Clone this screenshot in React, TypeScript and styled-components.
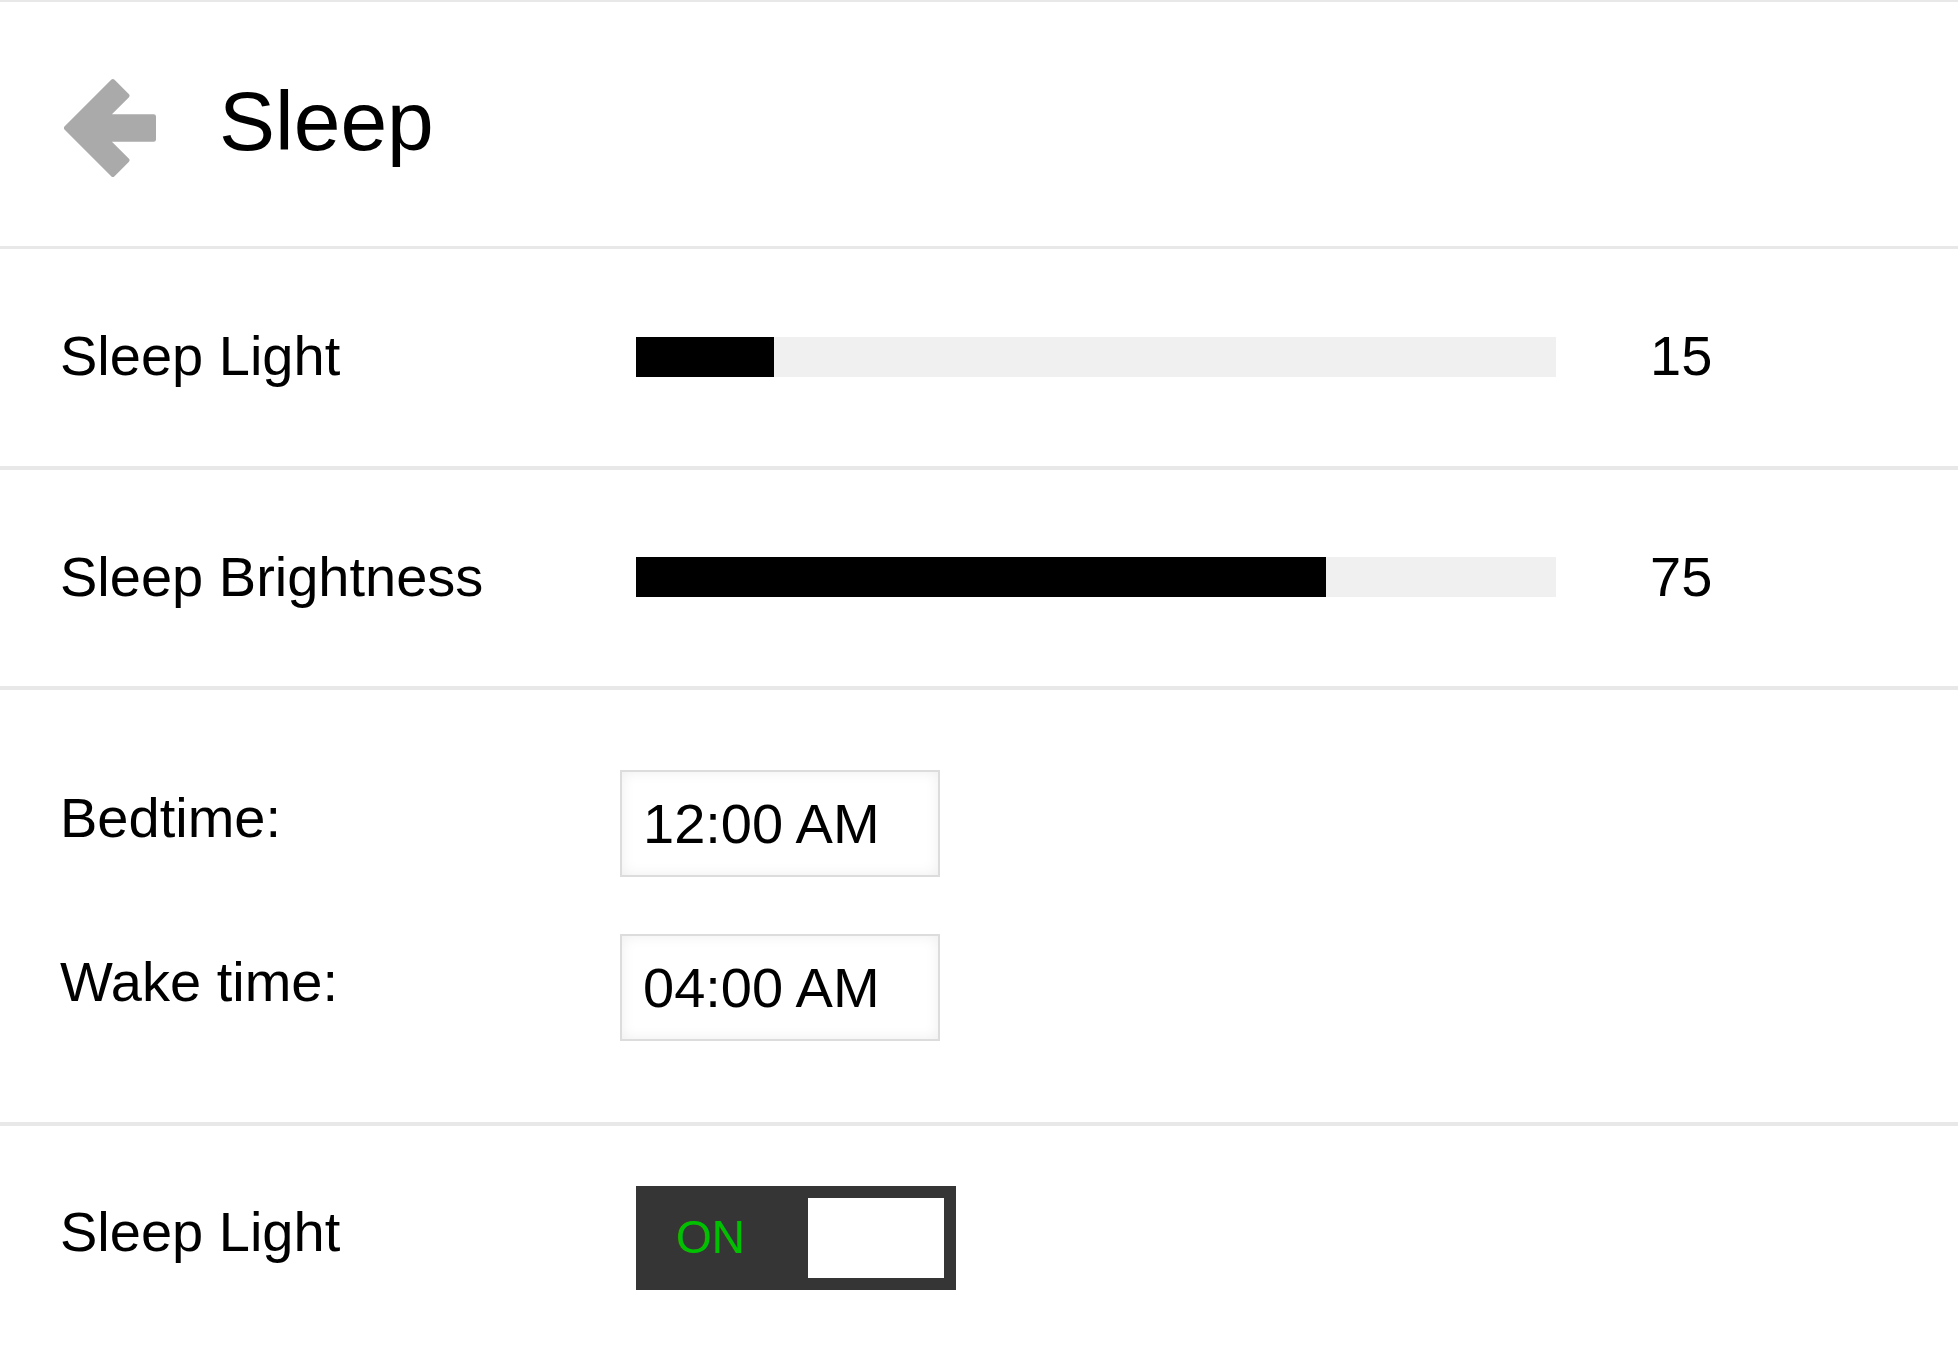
import styled, { createGlobalStyle } from "styled-components";

const GlobalStyle = createGlobalStyle`
  html, body {
    margin: 0;
    padding: 0;
    background: #ffffff;
  }
  body {
    font-family: "Liberation Sans", Arial, sans-serif;
    color: #000000;
  }
`;

const colors = {
  line: "#e8e8e8",
  track: "#f0f0f0",
  arrow: "#aaaaaa",
  toggle: "#353535",
  green: "#00c000",
};

const Page = styled.div`
  width: 100%;
  min-height: 1346px;
  display: flex;
  flex-direction: column;
`;

const Header = styled.header`
  display: flex;
  align-items: center;
  height: 244px;
  padding-left: 64px;
  border-top: 2px solid ${colors.line};
  border-bottom: 3px solid ${colors.line};
`;

const BackButton = styled.button`
  display: flex;
  padding: 0;
  margin: 8px 63px 0 0;
  border: none;
  background: none;
  cursor: pointer;
`;

const Title = styled.h1`
  margin: 0 0 5px;
  font-size: 84px;
  font-weight: 400;
  line-height: 1.15;
`;

const Row = styled.section<{ $height: number; $last?: boolean }>`
  display: grid;
  grid-template-columns: 484px 920px auto;
  column-gap: 92px;
  align-items: center;
  height: ${(p) => p.$height}px;
  padding-left: 60px;
  border-bottom: ${(p) => (p.$last ? "none" : `4px solid ${colors.line}`)};
`;

const TimeSection = styled.section`
  display: flex;
  flex-direction: column;
  gap: 57px;
  padding: 80px 0 0 60px;
  height: 352px;
  border-bottom: 4px solid ${colors.line};
`;

const TimeRow = styled.div`
  display: grid;
  grid-template-columns: 560px 320px;
  align-items: center;
`;

const Label = styled.span<{ $lift?: number }>`
  font-size: 56px;
  line-height: 1.15;
  padding-bottom: ${(p) => p.$lift ?? 2}px;
`;

const Track = styled.div`
  height: 40px;
  background: ${colors.track};
  margin-top: -2px;
`;

const Fill = styled.div`
  height: 100%;
  background: #000000;
`;

const Value = styled.span`
  font-size: 56px;
  line-height: 1.15;
  padding: 0 0 2px 2px;
`;

const TimeBox = styled.div`
  height: 107px;
  box-sizing: border-box;
  display: flex;
  align-items: center;
  padding-left: 21px;
  border: 2px solid #dcdcdc;
  box-shadow: inset 0 0 14px rgba(0, 0, 0, 0.07);
  background: #ffffff;
  font-size: 56px;
`;

const Toggle = styled.button`
  width: 320px;
  height: 104px;
  box-sizing: border-box;
  display: flex;
  align-items: center;
  justify-content: space-between;
  margin-top: 3px;
  padding: 12px 12px 12px 40px;
  border: none;
  background: ${colors.toggle};
  cursor: pointer;
  font-family: inherit;
`;

const ToggleText = styled.span`
  color: ${colors.green};
  font-size: 46px;
  margin-top: -2px;
`;

const Knob = styled.span`
  width: 136px;
  height: 80px;
  background: #ffffff;
`;

const BackArrow = () => (
  <svg width="92" height="98" viewBox="-2.5 -2.5 97 103" aria-hidden="true">
    <polygon
      points="0,49 49,0 64,15 42,37 92,37 92,61 42,61 64,83 49,98"
      fill={colors.arrow}
      stroke={colors.arrow}
      strokeWidth="5"
      strokeLinejoin="round"
    />
  </svg>
);

const SliderRow = ({ label, value, height }: { label: string; value: number; height: number }) => (
  <Row $height={height}>
    <Label>{label}</Label>
    <Track>
      <Fill style={{ width: `${value}%` }} />
    </Track>
    <Value>{value}</Value>
  </Row>
);

const App = () => {
  return (
    <Page>
      <GlobalStyle />
      <Header>
        <BackButton aria-label="Back">
          <BackArrow />
        </BackButton>
        <Title>Sleep</Title>
      </Header>

      <SliderRow label="Sleep Light" value={15} height={217} />
      <SliderRow label="Sleep Brightness" value={75} height={216} />

      <TimeSection>
        <TimeRow>
          <Label $lift={10}>Bedtime:</Label>
          <TimeBox>12:00 AM</TimeBox>
        </TimeRow>
        <TimeRow>
          <Label $lift={10}>Wake time:</Label>
          <TimeBox>04:00 AM</TimeBox>
        </TimeRow>
      </TimeSection>

      <Row $height={220} $last>
        <Label $lift={7}>Sleep Light</Label>
        <div>
          <Toggle aria-pressed="true">
            <ToggleText>ON</ToggleText>
            <Knob />
          </Toggle>
        </div>
      </Row>
    </Page>
  );
};

export default App;
